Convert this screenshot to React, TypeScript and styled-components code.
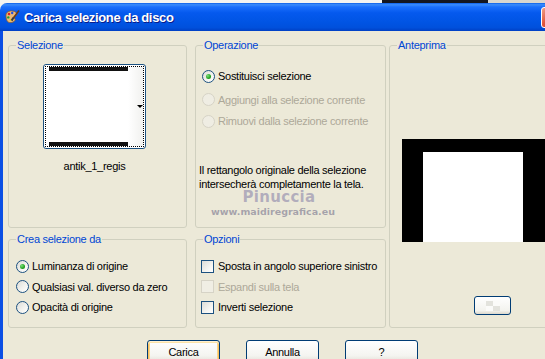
import React from "react";
import styled, { createGlobalStyle } from "styled-components";

const GlobalStyle = createGlobalStyle`
html, body {
    margin: 0;
    padding: 0;
    overflow: hidden;
    background: #f3f3ef;
}
#root {
    width: 545px;
    height: 359px;
    overflow: hidden;
}
`;

const uiFont = `"Liberation Sans", Arial, sans-serif`;

export default function App() {
    return (
        <Desktop>
            <GlobalStyle />
            <Backdrop>
                <BackdropPart $w={400} $color="#f4f4f1" />
                <BackdropPart $w={110} $color="#14161f" />
                <BackdropPart $w={60} $color="#d8d6cf" />
            </Backdrop>
            <Window>
                <TitleBar>
                    <AppIcon />
                    <Title>Carica selezione da disco</Title>
                    <CloseButton />
                </TitleBar>
                <Frame>
                    <Panels>
                        <LeftGrid>
                            <Group>
                                <Caption>Selezione</Caption>
                                <SelectionBody>
                                    <Thumb>
                                        <ThumbFocus>
                                            <ThumbImage />
                                            <ThumbStrip>
                                                <DropArrow />
                                            </ThumbStrip>
                                        </ThumbFocus>
                                    </Thumb>
                                    <ThumbLabel>antik_1_regis</ThumbLabel>
                                </SelectionBody>
                            </Group>

                            <Group>
                                <Caption>Operazione</Caption>
                                <OperationBody>
                                    <OptionRow>
                                        <Radio $checked />
                                        <span>Sostituisci selezione</span>
                                    </OptionRow>
                                    <OptionRow $disabled $gap={3}>
                                        <Radio $disabled />
                                        <span>Aggiungi alla selezione corrente</span>
                                    </OptionRow>
                                    <OptionRow $disabled $gap={1}>
                                        <Radio $disabled />
                                        <span>Rimuovi dalla selezione corrente</span>
                                    </OptionRow>
                                    <Note>
                                        Il rettangolo originale della selezione
                                        <br />
                                        intersecherà completamente la tela.
                                    </Note>
                                </OperationBody>
                            </Group>

                            <Group>
                                <Caption>Crea selezione da</Caption>
                                <SourceBody>
                                    <OptionRow>
                                        <Radio $checked />
                                        <span>Luminanza di origine</span>
                                    </OptionRow>
                                    <OptionRow>
                                        <Radio />
                                        <span>Qualsiasi val. diverso da zero</span>
                                    </OptionRow>
                                    <OptionRow>
                                        <Radio />
                                        <span>Opacità di origine</span>
                                    </OptionRow>
                                </SourceBody>
                            </Group>

                            <Group>
                                <Caption>Opzioni</Caption>
                                <OptionsBody>
                                    <CheckRow>
                                        <Check />
                                        <span>Sposta in angolo superiore sinistro</span>
                                    </CheckRow>
                                    <CheckRow $disabled>
                                        <Check $disabled />
                                        <span>Espandi sulla tela</span>
                                    </CheckRow>
                                    <CheckRow>
                                        <Check />
                                        <span>Inverti selezione</span>
                                    </CheckRow>
                                </OptionsBody>
                            </Group>
                        </LeftGrid>

                        <PreviewGroup>
                            <Caption>Anteprima</Caption>
                            <PreviewBody>
                                <PreviewImage>
                                    <PreviewInner />
                                </PreviewImage>
                                <SmallButton>
                                    <Checker />
                                </SmallButton>
                            </PreviewBody>
                        </PreviewGroup>
                    </Panels>

                    <ButtonRow>
                        <Button $default>Carica</Button>
                        <Button>Annulla</Button>
                        <Button>?</Button>
                    </ButtonRow>
                </Frame>

                <Watermark>
                    <WatermarkName>Pinuccia</WatermarkName>
                    <WatermarkSite>www.maidiregrafica.eu</WatermarkSite>
                </Watermark>
            </Window>
        </Desktop>
    );
}

function AppIcon() {
    return (
        <svg width="16" height="16" viewBox="0 0 16 16">
            <path d="M2 6 C2 2.5 7 1 10.5 2.5 C13.5 3.8 13 6.5 11 7 C9.5 7.4 10 9 11 10 C12 11.5 9 14 5.5 13.5 C2.5 13 2 9 2 6 Z" fill="#e9b97a" stroke="#8a5a2b" strokeWidth="0.8" />
            <circle cx="5" cy="5" r="1.3" fill="#e02020" />
            <circle cx="8.2" cy="4" r="1.2" fill="#2050e0" />
            <circle cx="4.3" cy="8.4" r="1.2" fill="#20a030" />
            <circle cx="6.5" cy="11" r="1.1" fill="#f0d020" />
            <path d="M15 1.5 L9 9.5" stroke="#6b3a12" strokeWidth="1.6" />
            <path d="M9.4 8.8 L7.6 11.6" stroke="#3a3a3a" strokeWidth="2" />
        </svg>
    );
}

const Desktop = styled.div`
display: flex;
flex-direction: column;
width: 545px;
height: 359px;
overflow: hidden;
`;

const Backdrop = styled.div`
display: flex;
height: 3px;
flex-shrink: 0;
`;

const BackdropPart = styled.div<{ $w: number; $color: string }>`
width: ${(p) => p.$w}px;
background: ${(p) => p.$color};
`;

const Window = styled.div`
position: relative;
width: 565px;
flex: 1;
display: flex;
flex-direction: column;
border-radius: 7px 7px 0 0;
overflow: hidden;
`;

const TitleBar = styled.div`
height: 28px;
flex-shrink: 0;
display: flex;
align-items: center;
padding-left: 4px;
background: linear-gradient(
    to bottom,
    #0a5ee8 0%,
    #3b8cfb 6%,
    #1a6ffb 14%,
    #0559ee 35%,
    #0054e3 70%,
    #0050dc 88%,
    #0040c4 100%
);
`;

const Title = styled.div`
margin-left: 4px;
margin-top: 1px;
font-family: ${uiFont};
font-weight: bold;
font-size: 13px;
letter-spacing: -0.35px;
color: #fff;
text-shadow: 1px 1px 0 #0a1c8a;
`;

const CloseButton = styled.div`
margin-left: auto;
margin-right: 3px;
width: 21px;
height: 21px;
box-sizing: border-box;
border: 1px solid #fff;
border-radius: 3px;
background: linear-gradient(135deg, #f0a08a, #e0553a 45%, #c83a1e);
`;

const Frame = styled.div`
flex: 1;
display: flex;
flex-direction: column;
border-left: 3px solid #0b4fe4;
background: #ece9d8;
padding: 8px 0 0 5px;
font-family: ${uiFont};
font-size: 11px;
letter-spacing: -0.28px;
color: #000;
`;

const Panels = styled.div`
display: flex;
gap: 3px;
`;

const LeftGrid = styled.div`
display: grid;
grid-template-columns: 179px 191px;
grid-template-rows: 189px 95px;
column-gap: 8px;
row-gap: 5px;
`;

const Group = styled.fieldset`
margin: 0;
padding: 0;
min-width: 0;
box-sizing: border-box;
border: 1px solid #d0d0bf;
border-radius: 3px;
`;

const PreviewGroup = styled(Group)`
width: 170px;
height: 289px;
`;

const Caption = styled.legend`
margin-left: 7px;
padding: 0 1px;
line-height: 12px;
color: #0046d5;
`;

const SelectionBody = styled.div`
display: flex;
flex-direction: column;
align-items: center;
padding: 13px 6px 0 0;
`;

const Thumb = styled.div`
width: 103px;
height: 85px;
box-sizing: border-box;
border: 1px solid #1c5180;
border-radius: 3px;
background: #fff;
padding: 1px;
`;

const ThumbFocus = styled.div`
height: 100%;
box-sizing: border-box;
border: 1px dotted #000;
display: flex;
padding-left: 3px;
`;

const ThumbImage = styled.div`
width: 79px;
background: #fff;
border-top: 4px solid #111;
border-bottom: 4px solid #111;
box-sizing: border-box;
`;

const ThumbStrip = styled.div`
flex: 1;
display: flex;
align-items: center;
justify-content: flex-end;
background: linear-gradient(to right, #fff, #f1f1ef);
`;

const DropArrow = styled.div`
width: 0;
height: 0;
border-left: 3px solid transparent;
border-right: 3px solid transparent;
border-top: 3px solid #000;
`;

const ThumbLabel = styled.div`
margin-top: 10px;
line-height: 14px;
`;

const OperationBody = styled.div`
display: flex;
flex-direction: column;
padding: 15px 0 0 6px;
`;

const SourceBody = styled.div`
display: flex;
flex-direction: column;
padding: 11px 0 0 7px;
`;

const OptionsBody = styled.div`
display: flex;
flex-direction: column;
padding: 11px 0 0 5px;
`;

const OptionRow = styled.label<{ $disabled?: boolean; $gap?: number }>`
display: flex;
align-items: center;
gap: 3px;
height: 20.5px;
margin-top: ${(p) => p.$gap ?? 0}px;
color: ${(p) => (p.$disabled ? "#aca899" : "#000")};
`;

const CheckRow = styled(OptionRow)`
gap: 4px;
`;

const Radio = styled.span<{ $checked?: boolean; $disabled?: boolean }>`
width: 13px;
height: 13px;
flex-shrink: 0;
box-sizing: border-box;
border-radius: 50%;
border: 1px solid ${(p) => (p.$disabled ? "#d6d3c6" : "#1c5180")};
background: ${(p) =>
        p.$disabled
            ? "#efede3"
            : "linear-gradient(135deg, #dcdcd7 0%, #f4f4f0 60%, #ffffff 100%)"};
display: flex;
align-items: center;
justify-content: center;

&::after {
    content: "";
    display: ${(p) => (p.$checked ? "block" : "none")};
    width: 5px;
    height: 5px;
    border-radius: 50%;
    background: radial-gradient(circle at 35% 35%, #7be07b, #21a121 60%, #158015);
}
`;

const Check = styled.span<{ $disabled?: boolean }>`
width: 13px;
height: 13px;
flex-shrink: 0;
box-sizing: border-box;
border: 1px solid ${(p) => (p.$disabled ? "#d6d3c6" : "#1c5180")};
background: ${(p) =>
        p.$disabled ? "#f0eee4" : "linear-gradient(135deg, #dcdcd7 0%, #f6f6f3 65%, #ffffff 100%)"};
`;

const Note = styled.div`
margin: 31px 0 0 -3px;
line-height: 14px;
`;

const PreviewBody = styled.div`
display: flex;
flex-direction: column;
padding: 88px 0 0 12px;
`;

const PreviewImage = styled.div`
width: 150px;
height: 103px;
box-sizing: border-box;
background: #000;
padding: 13px 0 0 21px;
`;

const PreviewInner = styled.div`
width: 100px;
height: 100%;
background: #fff;
`;

const SmallButton = styled.div`
margin: 54px 0 0 72px;
width: 37px;
height: 19px;
box-sizing: border-box;
border: 1px solid #003c74;
border-radius: 3px;
background: linear-gradient(to bottom, #ffffff, #f3f3ee 80%, #dcd8cc);
display: flex;
align-items: center;
justify-content: center;
`;

const Checker = styled.div`
width: 14px;
height: 10px;
background: conic-gradient(#fbfbf9 0 25%, #e3e3dd 0 50%, #fbfbf9 0 75%, #e3e3dd 0);
`;

const ButtonRow = styled.div`
display: flex;
gap: 26px;
margin-top: 12px;
padding-left: 139px;
`;

const Button = styled.div<{ $default?: boolean }>`
width: 73px;
height: 23px;
box-sizing: border-box;
border: 1px solid #003c74;
border-radius: 3px;
background: linear-gradient(to bottom, #ffffff, #f4f4f0 70%, #e3e0d6);
display: flex;
align-items: center;
justify-content: center;
font-size: 11px;
box-shadow: ${(p) =>
        p.$default
            ? "inset 0 1px 0 #fff0cf, inset 0 2px 0 #fce3a8, inset 1px 0 0 #f9c060, inset -1px 0 0 #f9c060, inset 2px 0 0 #fbd88a, inset -2px 0 0 #fbd88a"
            : "none"};
`;

const Watermark = styled.div`
position: absolute;
left: 209px;
top: 188px;
width: 128px;
display: flex;
flex-direction: column;
align-items: center;
pointer-events: none;
`;

const WatermarkName = styled.div`
padding-left: 12px;
font-family: "DejaVu Sans", sans-serif;
font-weight: bold;
font-size: 15px;
line-height: 12px;
letter-spacing: 0.3px;
color: rgba(120, 114, 160, 0.5);
`;

const WatermarkSite = styled.div`
margin-top: 3px;
font-family: "DejaVu Sans", sans-serif;
font-weight: bold;
font-size: 9.5px;
line-height: 12px;
color: rgba(118, 114, 140, 0.6);
`;
